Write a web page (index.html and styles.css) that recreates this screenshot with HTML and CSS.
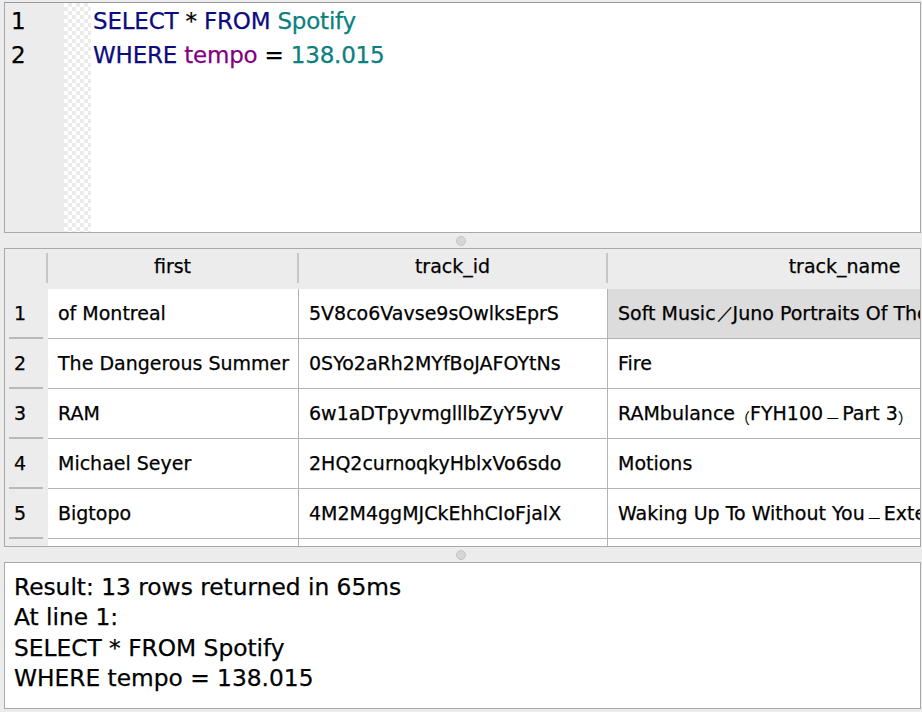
FILE: index.html
```html
<!DOCTYPE html>
<html>
<head>
<meta charset="utf-8">
<link rel="stylesheet" href="styles.css">
</head>
<body>
<div class="app">
  <div class="editor">
    <div class="gutter">
      <div class="ln">1</div>
      <div class="ln">2</div>
    </div>
    <div class="fold"></div>
    <div class="code">
      <div class="line"><span class="kw">SELECT</span> * <span class="kw">FROM</span> <span class="tbl">Spotify</span></div>
      <div class="line"><span class="kw">WHERE</span> <span class="col">tempo</span> = <span class="num">138.015</span></div>
    </div>
  </div>
  <div class="splitter"><span class="knob"></span></div>
  <div class="grid">
    <div class="head">
      <div class="hc hnum"></div>
      <div class="hc">first</div>
      <div class="hc">track_id</div>
      <div class="hc">track_name</div>
    </div>
    <div class="body">
      <div class="row">
        <div class="rn">1</div>
        <div class="cell">of Montreal</div>
        <div class="cell">5V8co6Vavse9sOwlksEprS</div>
        <div class="cell sel">Soft Music<span class="fs">／</span>Juno Portraits Of The Jupiter Choir</div>
      </div>
      <div class="row">
        <div class="rn">2</div>
        <div class="cell">The Dangerous Summer</div>
        <div class="cell">0SYo2aRh2MYfBoJAFOYtNs</div>
        <div class="cell">Fire</div>
      </div>
      <div class="row">
        <div class="rn">3</div>
        <div class="cell">RAM</div>
        <div class="cell">6w1aDTpyvmglllbZyY5yvV</div>
        <div class="cell">RAMbulance<span class="fw">（</span>FYH100<span class="fw dash">－</span>Part 3<span class="fw">）</span></div>
      </div>
      <div class="row">
        <div class="rn">4</div>
        <div class="cell">Michael Seyer</div>
        <div class="cell">2HQ2curnoqkyHblxVo6sdo</div>
        <div class="cell">Motions</div>
      </div>
      <div class="row">
        <div class="rn">5</div>
        <div class="cell">Bigtopo</div>
        <div class="cell">4M2M4ggMJCkEhhCIoFjalX</div>
        <div class="cell">Waking Up To Without You<span class="fw dash">－</span>Extended Mix</div>
      </div>
      <div class="row">
        <div class="rn">6</div>
        <div class="cell">&nbsp;</div>
        <div class="cell">&nbsp;</div>
        <div class="cell">&nbsp;</div>
      </div>
    </div>
  </div>
  <div class="splitter"><span class="knob"></span></div>
  <div class="result">
    <div>Result: 13 rows returned in 65ms</div>
    <div>At line 1:</div>
    <div>SELECT * FROM Spotify</div>
    <div>WHERE tempo = 138.015</div>
  </div>
</div>
</body>
</html>
```
FILE: styles.css
```css
html, body {
  margin: 0;
  padding: 0;
  background: #ececec;
  width: 922px;
  height: 712px;
  overflow: hidden;
  font-family: "DejaVu Sans", "Noto Sans CJK SC", sans-serif;
  color: #000;
  -webkit-text-stroke: 0.25px currentColor;
}
.app {
  display: flex;
  flex-direction: column;
  padding: 2px 1px 0 4px;
}
.editor {
  height: 231px;
  box-sizing: border-box;
  border: 1px solid #a9a9a9;
  border-top-color: #999;
  background: #fff;
  display: flex;
}
.gutter {
  width: 59px;
  background: #ececec;
  padding-top: 1px;
  font-size: 23px;
  line-height: 34px;
}
.ln { padding-left: 6px; }
.fold {
  width: 27px;
  background-color: #fff;
  background-image: conic-gradient(#ebebeb 25%, #fff 0 50%, #ebebeb 0 75%, #fff 0);
  background-size: 8px 8px;
}
.code {
  padding: 1px 0 0 2px;
  font-size: 23px;
  line-height: 34px;
  letter-spacing: -0.2px;
  white-space: nowrap;
}
.kw { color: #0c0c80; }
.tbl { color: #0a8080; }
.col { color: #820082; }
.num { color: #0a8080; }

.splitter {
  height: 15px;
  display: flex;
  align-items: center;
  justify-content: center;
  padding-right: 4px;
}
.knob {
  width: 10px;
  height: 10px;
  border-radius: 50%;
  background: #d6d6d6;
  border: 1px solid #c4c4c4;
  box-sizing: border-box;
}

.grid {
  height: 299px;
  box-sizing: border-box;
  border: 1px solid #a9a9a9;
  overflow: hidden;
  background: #ececec;
  font-size: 19px;
}
.head, .row {
  display: grid;
  grid-template-columns: 43px 251px 309px 475px;
}
.head {
  padding: 4px 0 6px;
}
.hc {
  height: 30px;
  box-sizing: border-box;
  border-right: 2px solid #c6c6c6;
  display: flex;
  align-items: center;
  justify-content: center;
  padding-bottom: 4px;
  white-space: nowrap;
}
.row { height: 50px; }
.rn {
  background: linear-gradient(#b9b9b9, #b9b9b9) no-repeat 4px 48px / 34px 2px;
  display: flex;
  align-items: center;
  padding-left: 9px;
  padding-bottom: 2px;
}
.cell {
  background: #fff;
  border-right: 1px solid #b3b3b3;
  border-bottom: 1px solid #b3b3b3;
  display: flex;
  align-items: center;
  padding-left: 10px;
  padding-bottom: 1px;
  white-space: nowrap;
  overflow: hidden;
  line-height: 22px;
}
.cell.sel { background: #dcdcdc; }
.fw {
  font-family: "Noto Sans CJK SC", sans-serif;
  font-size: 15px;
  line-height: 15px;
  align-self: center;
  padding-top: 9px;
  -webkit-text-stroke: 0.1px currentColor;
}
.fw.dash { padding: 9px 2px 0; }
.fs {
  font-family: "DejaVu Sans", sans-serif;
  font-size: 17px;
  padding: 0 1px;
  letter-spacing: -2px;
}

.result {
  height: 147px;
  box-sizing: border-box;
  border: 1px solid #a9a9a9;
  background: #fff;
  padding: 9px 9px 0;
  font-size: 23.3px;
  line-height: 30.3px;
}
```
